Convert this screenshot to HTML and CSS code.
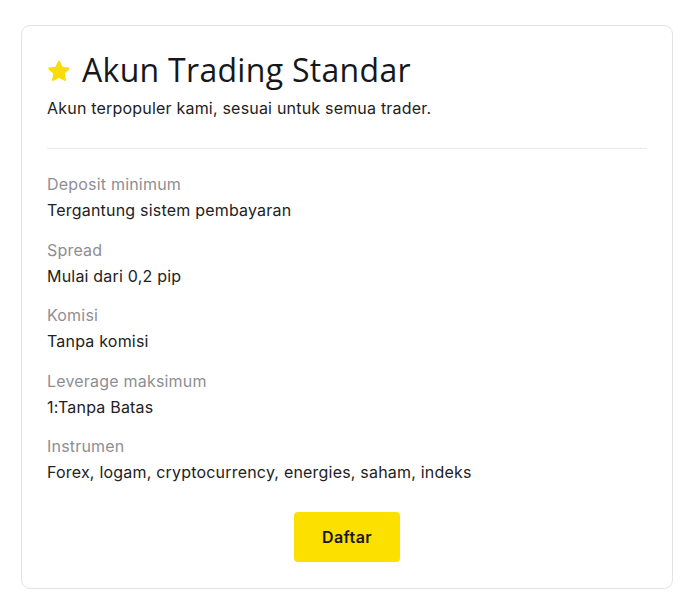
FILE: index.html
```html
<!DOCTYPE html>
<html lang="id">
<head>
<meta charset="utf-8">
<title>Akun Trading Standar</title>
<link rel="stylesheet" href="styles.css">
</head>
<body>
<div class="card">
  <h2 class="title">
    <svg class="star" viewBox="0 0 24 24" aria-hidden="true"><path d="M12 1.6c.4 0 .7.2.9.6l2.7 5.6 6.1.8c.9.1 1.2 1.2.6 1.8l-4.5 4.2 1.1 6.1c.2.9-.8 1.5-1.5 1.1L12 18.9l-5.4 2.9c-.8.4-1.7-.2-1.5-1.1l1.1-6.1-4.5-4.2c-.6-.6-.3-1.7.6-1.8l6.1-.8 2.7-5.6c.2-.4.5-.6.9-.6z"/></svg>
    <span>Akun Trading Standar</span>
  </h2>
  <p class="subtitle">Akun terpopuler kami, sesuai untuk semua trader.</p>
  <hr class="divider">
  <dl class="specs">
    <div class="spec"><dt>Deposit minimum</dt><dd>Tergantung sistem pembayaran</dd></div>
    <div class="spec"><dt>Spread</dt><dd>Mulai dari 0,2 pip</dd></div>
    <div class="spec"><dt>Komisi</dt><dd>Tanpa komisi</dd></div>
    <div class="spec"><dt>Leverage maksimum</dt><dd>1:Tanpa Batas</dd></div>
    <div class="spec"><dt>Instrumen</dt><dd>Forex, logam, cryptocurrency, energies, saham, indeks</dd></div>
  </dl>
  <div class="actions"><a class="btn" href="#">Daftar</a></div>
</div>
</body>
</html>
```
FILE: styles.css
```css
* { box-sizing: border-box; }
html, body { margin: 0; padding: 0; background: #fff; }
body {
  padding: 25px 23px 22px 21px;
  font-family: Inter, "Noto Sans", sans-serif;
  color: #222;
}
.card {
  width: 652px;
  height: 564px;
  border: 1px solid #e3e3e6;
  border-radius: 9px;
  padding: 22px 25px 26px 25px;
  display: flex;
  flex-direction: column;
}
.title {
  margin: 0;
  display: flex;
  align-items: center;
  gap: 11px;
  font-family: "Open Sans", Inter, sans-serif;
  font-weight: 500;
  font-size: 32px;
  letter-spacing: 0.3px;
  line-height: 44px;
  color: #16171a;
}
.star { width: 24px; height: 24px; fill: #fadc0a; flex: none; margin-top: 1px; }
.subtitle {
  margin: 3px 0 0;
  font-size: 16px;
  letter-spacing: 0.2px;
  line-height: 26px;
  color: #222;
}
.divider {
  border: 0;
  border-top: 1px solid #e8e8ea;
  margin: 27px 0 0;
  height: 0;
}
.specs {
  margin: 22px 0 0;
  display: flex;
  flex-direction: column;
  gap: 13.5px;
}
.spec dt {
  font-size: 16px;
  letter-spacing: 0.2px;
  line-height: 26px;
  color: #8e8e93;
}
.spec dd {
  margin: 0;
  font-size: 16px;
  letter-spacing: 0.2px;
  line-height: 26px;
  color: #222;
}
.actions {
  margin-top: 27px;
  display: flex;
  justify-content: center;
}
.btn {
  display: flex;
  align-items: center;
  justify-content: center;
  width: 106px;
  height: 50px;
  border-radius: 4px;
  background: #fce000;
  color: #16171a;
  font-weight: 600;
  font-size: 16px;
  letter-spacing: 0.4px;
  text-decoration: none;
}
```
